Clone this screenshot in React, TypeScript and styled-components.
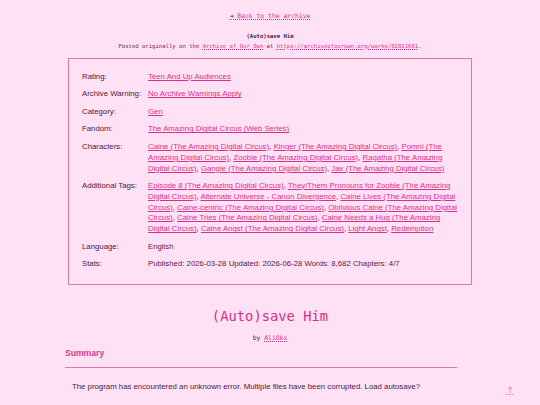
import React from "react";
import styled, { createGlobalStyle } from "styled-components";

const GlobalStyle = createGlobalStyle`
  html, body {
    margin: 0;
    padding: 0;
    background: #ffe1f5;
  }
  body {
    font-family: "Liberation Sans", Arial, sans-serif;
    color: #4e1a3c;
  }
`;

const Page = styled.div`
  width: 404px;
  margin: 0 auto;
  padding-top: 10px;
  padding-bottom: 20px;
  position: relative;
`;

const Mono = styled.div`
  font-family: "DejaVu Sans Mono", "Liberation Mono", monospace;
  text-align: center;
`;

const BackLink = styled(Mono)`
  font-size: 6.4px;
  line-height: 12px;
  margin-bottom: 9px;
`;

const Link = styled.a`
  color: #dd2f8a;
  text-decoration: underline;
  text-underline-offset: 1px;
`;

const DottedLink = styled(Link)`
  text-decoration-style: dotted;
`;

const SmallTitle = styled(Mono)`
  font-size: 5.6px;
  font-weight: bold;
  line-height: 10px;
`;

const Posted = styled(Mono)`
  font-size: 5.6px;
  line-height: 10px;
  color: #6a2a4c;
`;

const MetaBox = styled.dl`
  margin: 7px 0 0;
  border: 1.5px solid #df7aab;
  box-shadow: inset 0 0 1px #f0a8c8;
  padding: 13px 14px 14px 13px;
  display: grid;
  grid-template-columns: 66px 1fr;
  row-gap: 6.7px;
  font-size: 7.8px;
  line-height: 10.8px;
`;

const Label = styled.dt`
  margin: 0;
  color: #4e1a3c;
`;

const Value = styled.dd<{ plain?: boolean }>`
  margin: 0;
  color: ${(p) => (p.plain ? "#5e1a44" : "#dd2f8a")};
`;

const Heading = styled(Mono)`
  font-size: 13.8px;
  line-height: 18px;
  color: #d62f85;
  margin-top: 22px;
`;

const Byline = styled(Mono)`
  font-size: 6.4px;
  line-height: 10px;
  margin-top: 8px;
  color: #6a2046;
`;

const SummaryTitle = styled.h3`
  margin: 4px 0 0 -3px;
  font-size: 8.6px;
  line-height: 12px;
  font-weight: bold;
  color: #d93a8c;
`;

const Rule = styled.hr`
  margin: 8px 15px 0 -3px;
  border: none;
  border-top: 1.5px solid #d877a8;
`;

const Summary = styled.p`
  margin: 13px 0 0 4px;
  font-size: 7.8px;
  line-height: 11px;
  color: #4e1a3c;
`;

const UpArrow = styled.a`
  position: fixed;
  right: 26px;
  bottom: 10px;
  font-family: "DejaVu Sans", sans-serif;
  font-size: 9px;
  color: #e07aac;
  text-decoration: underline dotted;
`;

type Tag = string;

const characters: Tag[] = [
  "Caine (The Amazing Digital Circus)",
  "Kinger (The Amazing Digital Circus)",
  "Pomni (The Amazing Digital Circus)",
  "Zooble (The Amazing Digital Circus)",
  "Ragatha (The Amazing Digital Circus)",
  "Gangle (The Amazing Digital Circus)",
  "Jax (The Amazing Digital Circus)",
];

const tags: Tag[] = [
  "Episode 8 (The Amazing Digital Circus)",
  "They/Them Pronouns for Zooble (The Amazing Digital Circus)",
  "Alternate Universe - Canon Divergence",
  "Caine Lives (The Amazing Digital Circus)",
  "Caine-centric (The Amazing Digital Circus)",
  "Oblivious Caine (The Amazing Digital Circus)",
  "Caine Tries (The Amazing Digital Circus)",
  "Caine Needs a Hug (The Amazing Digital Circus)",
  "Caine Angst (The Amazing Digital Circus)",
  "Light Angst",
  "Redemption",
];

const TagList: React.FC<{ items: Tag[] }> = ({ items }) => (
  <>
    {items.map((t, i) => (
      <React.Fragment key={t}>
        <Link href="#">{t}</Link>
        {i < items.length - 1 ? ", " : ""}
      </React.Fragment>
    ))}
  </>
);

export default function App() {
  return (
    <>
      <GlobalStyle />
      <Page>
        <BackLink>
          <DottedLink href="#">◄ Back to the archive</DottedLink>
        </BackLink>
        <SmallTitle>(Auto)save Him</SmallTitle>
        <Posted>
          Posted originally on the <DottedLink href="#">Archive of Our Own</DottedLink> at{" "}
          <DottedLink href="#">https://archiveofourown.org/works/82811681</DottedLink>.
        </Posted>

        <MetaBox>
          <Label>Rating:</Label>
          <Value>
            <Link href="#">Teen And Up Audiences</Link>
          </Value>
          <Label>Archive Warning:</Label>
          <Value>
            <Link href="#">No Archive Warnings Apply</Link>
          </Value>
          <Label>Category:</Label>
          <Value>
            <Link href="#">Gen</Link>
          </Value>
          <Label>Fandom:</Label>
          <Value>
            <Link href="#">The Amazing Digital Circus (Web Series)</Link>
          </Value>
          <Label>Characters:</Label>
          <Value plain>
            <TagList items={characters} />
          </Value>
          <Label>Additional Tags:</Label>
          <Value plain>
            <TagList items={tags} />
          </Value>
          <Label>Language:</Label>
          <Value plain>English</Value>
          <Label>Stats:</Label>
          <Value plain>
            Published: 2026-03-28 Updated: 2026-06-28 Words: 8,682 Chapters: 4/7
          </Value>
        </MetaBox>

        <Heading>(Auto)save Him</Heading>
        <Byline>
          by <DottedLink href="#">AliOks</DottedLink>
        </Byline>
        <SummaryTitle>Summary</SummaryTitle>
        <Rule />
        <Summary>
          The program has encountered an unknown error. Multiple files have been corrupted. Load
          autosave?
        </Summary>
      </Page>
      <UpArrow href="#">↑</UpArrow>
    </>
  );
}
